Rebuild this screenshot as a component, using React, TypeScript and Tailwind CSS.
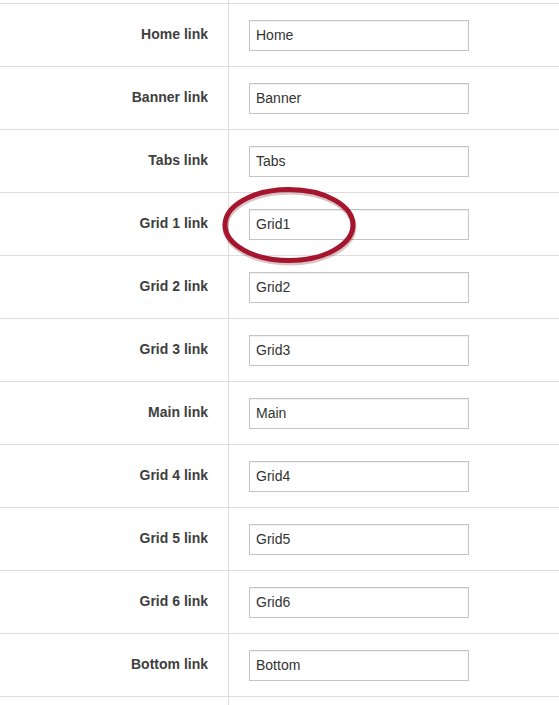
const rows = [
  { label: 'Home link', value: 'Home' },
  { label: 'Banner link', value: 'Banner' },
  { label: 'Tabs link', value: 'Tabs' },
  { label: 'Grid 1 link', value: 'Grid1' },
  { label: 'Grid 2 link', value: 'Grid2' },
  { label: 'Grid 3 link', value: 'Grid3' },
  { label: 'Main link', value: 'Main' },
  { label: 'Grid 4 link', value: 'Grid4' },
  { label: 'Grid 5 link', value: 'Grid5' },
  { label: 'Grid 6 link', value: 'Grid6' },
  { label: 'Bottom link', value: 'Bottom' },
];

export default function App() {
  return (
    <div className="relative h-[705px] w-[559px] overflow-hidden bg-white font-['Liberation_Sans',Arial,sans-serif] text-[14px] text-[#333]">
      {/* top sliver of previous row */}
      <div className="flex h-[3px]">
        <div className="w-[229px] border-r border-[#dddddd]" />
      </div>

      <div className="border-t border-[#dddddd]">
        {rows.map((r) => (
          <div key={r.label} className="flex h-[63px] border-b border-[#dddddd]">
            <div className="flex w-[229px] items-center justify-end border-r border-[#dddddd] pr-[20px] pb-[1px] font-bold text-[#3e3e3e]">
              {r.label}
            </div>
            <div className="flex items-center pl-[20px]">
              <input
                readOnly
                value={r.value}
                className="h-[31px] w-[220px] border border-[#c4c4c4] bg-white px-[6px] text-[14px] text-[#333] outline-none shadow-[inset_0_1px_1px_rgba(0,0,0,0.06)]"
              />
            </div>
          </div>
        ))}
      </div>

      <div className="flex h-[20px]">
        <div className="w-[229px] border-r border-[#dddddd]" />
      </div>

      {/* highlight ring around Grid1 */}
      <svg
        className="pointer-events-none absolute left-[218px] top-[184px]"
        width="142"
        height="84"
        viewBox="0 0 142 84"
      >
        <ellipse cx="71" cy="42" rx="64" ry="35.5" fill="none" stroke="#6b0f1c" strokeOpacity="0.25" strokeWidth="6" transform="translate(0.5,1)" />
        <ellipse cx="71" cy="41" rx="64" ry="35.5" fill="none" stroke="#a5162e" strokeWidth="5" />
      </svg>
    </div>
  );
}
